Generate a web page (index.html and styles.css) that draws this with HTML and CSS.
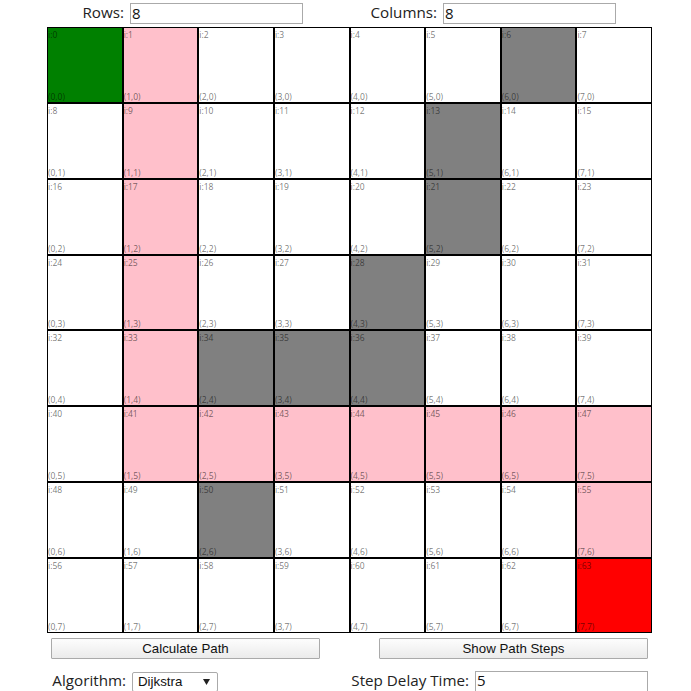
FILE: index.html
```html
<!DOCTYPE html>
<html lang="en">
<head>
    <meta charset="UTF-8">
    <meta name="viewport" content="width=device-width, initial-scale=1.0">
    <title>Path Finder</title>
    <link rel="stylesheet" href="styles.css">
</head>
<body>
    <div class="wrapper">
        <div class="size-row">
            <label class="field rows-field">Rows: <input class="text-input" type="text" value="8"></label>
            <label class="field cols-field">Columns: <input class="text-input" type="text" value="8"></label>
        </div>
        <div class="board">
            <div class="cell start"><span>i:0</span><span>(0,0)</span></div>
            <div class="cell path"><span>i:1</span><span>(1,0)</span></div>
            <div class="cell"><span>i:2</span><span>(2,0)</span></div>
            <div class="cell"><span>i:3</span><span>(3,0)</span></div>
            <div class="cell"><span>i:4</span><span>(4,0)</span></div>
            <div class="cell"><span>i:5</span><span>(5,0)</span></div>
            <div class="cell wall"><span>i:6</span><span>(6,0)</span></div>
            <div class="cell"><span>i:7</span><span>(7,0)</span></div>

            <div class="cell"><span>i:8</span><span>(0,1)</span></div>
            <div class="cell path"><span>i:9</span><span>(1,1)</span></div>
            <div class="cell"><span>i:10</span><span>(2,1)</span></div>
            <div class="cell"><span>i:11</span><span>(3,1)</span></div>
            <div class="cell"><span>i:12</span><span>(4,1)</span></div>
            <div class="cell wall"><span>i:13</span><span>(5,1)</span></div>
            <div class="cell"><span>i:14</span><span>(6,1)</span></div>
            <div class="cell"><span>i:15</span><span>(7,1)</span></div>

            <div class="cell"><span>i:16</span><span>(0,2)</span></div>
            <div class="cell path"><span>i:17</span><span>(1,2)</span></div>
            <div class="cell"><span>i:18</span><span>(2,2)</span></div>
            <div class="cell"><span>i:19</span><span>(3,2)</span></div>
            <div class="cell"><span>i:20</span><span>(4,2)</span></div>
            <div class="cell wall"><span>i:21</span><span>(5,2)</span></div>
            <div class="cell"><span>i:22</span><span>(6,2)</span></div>
            <div class="cell"><span>i:23</span><span>(7,2)</span></div>

            <div class="cell"><span>i:24</span><span>(0,3)</span></div>
            <div class="cell path"><span>i:25</span><span>(1,3)</span></div>
            <div class="cell"><span>i:26</span><span>(2,3)</span></div>
            <div class="cell"><span>i:27</span><span>(3,3)</span></div>
            <div class="cell wall"><span>i:28</span><span>(4,3)</span></div>
            <div class="cell"><span>i:29</span><span>(5,3)</span></div>
            <div class="cell"><span>i:30</span><span>(6,3)</span></div>
            <div class="cell"><span>i:31</span><span>(7,3)</span></div>

            <div class="cell"><span>i:32</span><span>(0,4)</span></div>
            <div class="cell path"><span>i:33</span><span>(1,4)</span></div>
            <div class="cell wall"><span>i:34</span><span>(2,4)</span></div>
            <div class="cell wall"><span>i:35</span><span>(3,4)</span></div>
            <div class="cell wall"><span>i:36</span><span>(4,4)</span></div>
            <div class="cell"><span>i:37</span><span>(5,4)</span></div>
            <div class="cell"><span>i:38</span><span>(6,4)</span></div>
            <div class="cell"><span>i:39</span><span>(7,4)</span></div>

            <div class="cell"><span>i:40</span><span>(0,5)</span></div>
            <div class="cell path"><span>i:41</span><span>(1,5)</span></div>
            <div class="cell path"><span>i:42</span><span>(2,5)</span></div>
            <div class="cell path"><span>i:43</span><span>(3,5)</span></div>
            <div class="cell path"><span>i:44</span><span>(4,5)</span></div>
            <div class="cell path"><span>i:45</span><span>(5,5)</span></div>
            <div class="cell path"><span>i:46</span><span>(6,5)</span></div>
            <div class="cell path"><span>i:47</span><span>(7,5)</span></div>

            <div class="cell"><span>i:48</span><span>(0,6)</span></div>
            <div class="cell"><span>i:49</span><span>(1,6)</span></div>
            <div class="cell wall"><span>i:50</span><span>(2,6)</span></div>
            <div class="cell"><span>i:51</span><span>(3,6)</span></div>
            <div class="cell"><span>i:52</span><span>(4,6)</span></div>
            <div class="cell"><span>i:53</span><span>(5,6)</span></div>
            <div class="cell"><span>i:54</span><span>(6,6)</span></div>
            <div class="cell path"><span>i:55</span><span>(7,6)</span></div>

            <div class="cell"><span>i:56</span><span>(0,7)</span></div>
            <div class="cell"><span>i:57</span><span>(1,7)</span></div>
            <div class="cell"><span>i:58</span><span>(2,7)</span></div>
            <div class="cell"><span>i:59</span><span>(3,7)</span></div>
            <div class="cell"><span>i:60</span><span>(4,7)</span></div>
            <div class="cell"><span>i:61</span><span>(5,7)</span></div>
            <div class="cell"><span>i:62</span><span>(6,7)</span></div>
            <div class="cell end"><span>i:63</span><span>(7,7)</span></div>
        </div>
        <div class="button-row">
            <button class="action-btn" type="button">Calculate Path</button>
            <button class="action-btn" type="button">Show Path Steps</button>
        </div>
        <div class="option-row">
            <label class="field algo-field">Algorithm:
                <span class="select-box">Dijkstra<svg class="select-arrow" width="7" height="6" viewBox="0 0 7 6"><path d="M0 0H7L3.5 6Z"/></svg></span>
            </label>
            <label class="field delay-field">Step Delay Time: <input class="text-input" type="text" value="5"></label>
        </div>
    </div>
</body>
</html>
```

FILE: styles.css
```css
html, body{
    margin: 0;
    height: 691px;
    overflow: hidden;
    background-color: white;
}
.wrapper{
    width: 691px;
    font-family: "Open Sans", sans-serif;
    font-size: 15.2px;
    line-height: 19px;
    color: #222222;
}
.field{
    display: flex;
    align-items: flex-start;
    justify-content: flex-end;
    gap: 6px;
    white-space: nowrap;
}
.text-input{
    box-sizing: border-box;
    width: 173px;
    height: 21px;
    padding: 0 1px 2px;
    border: 1px solid #aaaaaa;
    font-family: "Open Sans", sans-serif;
    font-size: 15px;
    color: #111111;
    outline: none;
}
.size-row{
    display: flex;
    height: 27.4px;
    padding-top: 3px;
    box-sizing: border-box;
}
.rows-field{
    width: 303px;
}
.cols-field{
    width: 313px;
}
.board{
    display: grid;
    grid-template-columns: repeat(8, 75.625px);
    grid-template-rows: repeat(8, 75.75px);
    width: 605px;
    margin-left: 47px;
}
.cell{
    display: flex;
    flex-direction: column;
    justify-content: space-between;
    padding-top: 1px;
    border: 1px solid black;
    font-size: 8.5px;
    line-height: 11px;
    color: rgba(0, 0, 0, 0.55);
    overflow: hidden;
}
.path{
    background-color: pink;
}
.wall{
    background-color: gray;
}
.start{
    background-color: green;
}
.end{
    background-color: red;
}
.button-row{
    display: flex;
    gap: 59px;
    margin: 4.6px 0 0 51px;
}
.action-btn{
    box-sizing: border-box;
    width: 269px;
    height: 21px;
    padding: 0;
    border: 1px solid #aaaaaa;
    border-radius: 1px;
    background: linear-gradient(#fdfdfd, #ebebeb);
    font-family: "Liberation Sans", sans-serif;
    font-size: 13.3px;
    color: #111111;
}
.option-row{
    display: flex;
    height: 21px;
    margin-top: 12px;
}
.algo-field{
    width: 218px;
}
.delay-field{
    width: 430px;
}
.select-box{
    box-sizing: border-box;
    display: flex;
    align-items: center;
    justify-content: space-between;
    width: 86px;
    height: 20px;
    margin-top: 1px;
    padding: 0 7px 0 5px;
    border: 1px solid #aaaaaa;
    border-radius: 2px;
    font-family: "Liberation Sans", sans-serif;
    font-size: 13.3px;
    color: #111111;
}
.select-arrow{
    fill: #222222;
}
```
